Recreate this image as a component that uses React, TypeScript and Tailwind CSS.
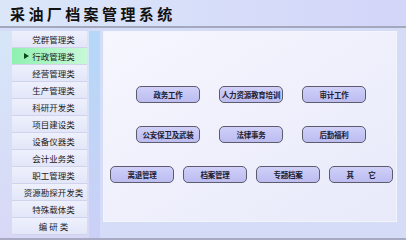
import React from "react";

const menu = [
  "党群管理类",
  "行政管理类",
  "经营管理类",
  "生产管理类",
  "科研开发类",
  "项目建设类",
  "设备仪器类",
  "会计业务类",
  "职工管理类",
  "资源勘探开发类",
  "特殊载体类",
  "编 研 类",
];

const rows = [
  ["政务工作", "人力资源教育培训", "审计工作"],
  ["公安保卫及武装", "法律事务", "后勤福利"],
];
const lastRow = ["离退管理", "档案管理", "专题档案", "其　　它"];

function Btn({ label }: { label: string }) {
  return (
    <div className="flex h-[17px] w-[64px] items-center justify-center whitespace-nowrap rounded-[5px] border border-[#5c5c6c] bg-gradient-to-b from-[#d0d0fa] to-[#bcbcf0] text-[7.5px] font-bold tracking-[-0.2px] text-[#202030]">
      {label}
    </div>
  );
}

export default function App() {
  return (
    <div
      className="flex h-[240px] w-[406px] flex-col overflow-hidden bg-[#d4dcf8]"
      style={{ fontFamily: '"Noto Sans CJK SC", "Noto Sans", sans-serif' }}
    >
      <header className="flex h-[28px] shrink-0 items-center border-b-2 border-[#a4a8bc] bg-gradient-to-r from-[#dbe7f9] to-[#d3d5f9] pl-[10px]">
        <h1 className="text-[15px] font-bold leading-none tracking-[3.4px] text-[#111]">
          采油厂档案管理系统
        </h1>
      </header>

      <div className="flex flex-1 border-b-2 border-[#a8aac4] pt-[3px]">
        <aside className="flex w-[100px] shrink-0 bg-gradient-to-b from-[#d6e6f8] to-[#d8d8f6] pl-[12px]">
          <ul className="flex w-[75px] flex-col">
            {menu.map((m, i) => (
              <li
                key={m}
                className={`relative flex h-[17px] items-center justify-center border-b border-[#cfd4ec] pl-[8px] text-[8.5px] text-[#222] ${
                  i === 1
                    ? "bg-gradient-to-r from-[#8ff0b0] to-[#c8f8d8]"
                    : "bg-gradient-to-b from-[#eef0fc] to-[#e2e6f8]"
                }`}
              >
                {i === 1 && (
                  <span className="absolute left-[12px] top-[5px] h-0 w-0 border-y-[3.5px] border-l-[5px] border-y-transparent border-l-[#0a4a1a]" />
                )}
                {m}
              </li>
            ))}
          </ul>
          <div className="ml-auto w-[11px] bg-gradient-to-b from-[#b4d8f8] to-[#ccd0f6]" />
        </aside>

        <div className="flex flex-1 flex-col pl-[3px] pr-[9px]">
          <main className="flex h-[191px] flex-col border border-[#f4f4fc] bg-gradient-to-br from-[#f6f6fe] to-[#e8eafa] pt-[54px]">
            <div className="flex w-full flex-col gap-[23px]">
              {rows.map((r, ri) => (
                <div key={ri} className="ml-[32px] flex gap-[19px]">
                  {r.map((l) => (
                    <Btn key={l} label={l} />
                  ))}
                </div>
              ))}
              <div className="ml-[6px] flex gap-[9px]">
                {lastRow.map((l) => (
                  <Btn key={l} label={l} />
                ))}
              </div>
            </div>
          </main>
        </div>
      </div>
    </div>
  );
}
